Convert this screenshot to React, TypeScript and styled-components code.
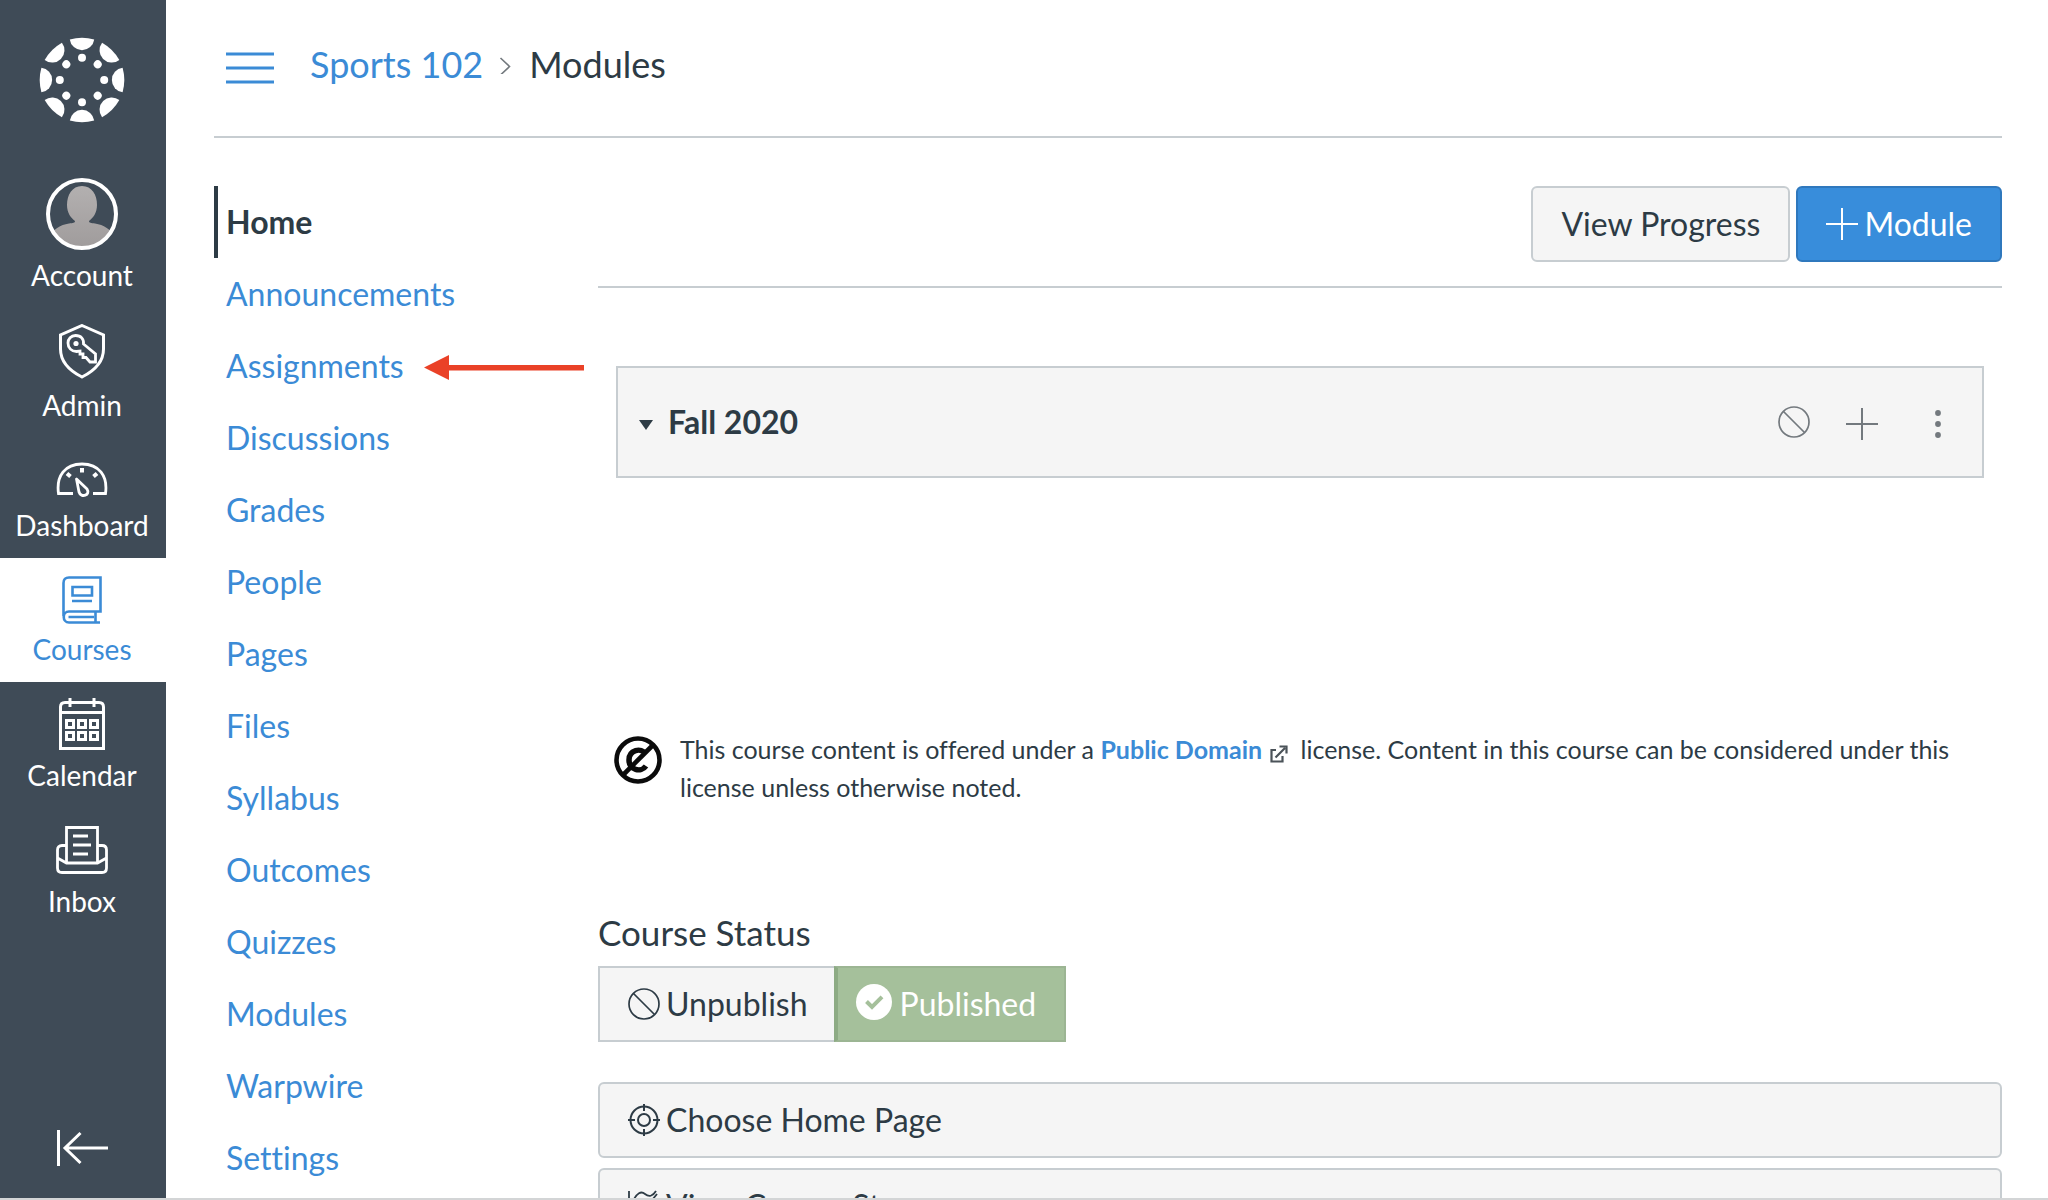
import React from 'react';
import styled, { createGlobalStyle, css } from 'styled-components';

const color = {
  nav: '#3f4b57',
  ink: '#2d3b45',
  link: '#3b8bd6',
  line: '#c7cdd1',
  fill: '#f5f5f5',
  green: '#a5c09b',
};

const GlobalStyle = createGlobalStyle`
  *, *::before, *::after { box-sizing: border-box; }
  html, body { margin: 0; background: #fff; }
  body, button { font-family: Lato, "Liberation Sans", sans-serif; color: ${color.ink}; font-variant-ligatures: none; }
  a { text-decoration: none; color: ${color.link}; }
  button { cursor: pointer; }
  svg { display: block; flex: none; }
`;

const Screen = styled.div`
  display: flex;
  height: 100vh;
  overflow: hidden;
  border-bottom: 2px solid #d3d5d6;
`;

const GlobalNav = styled.nav`
  display: flex;
  flex-direction: column;
  flex: none;
  width: 166px;
  background: ${color.nav};
`;

const Logo = styled.a`
  display: flex;
  justify-content: center;
  padding: 36px 2px 38px 0;
  color: #fff;
`;

const GlobalLink = styled.a<{ $active?: boolean }>`
  display: flex;
  flex-direction: column;
  align-items: center;
  gap: 8px;
  padding: 16px 2px 16px 0;
  font-size: 28px;
  line-height: 34px;
  color: #fff;
  ${(p) => p.$active && css`
    background: #fff;
    color: ${color.link};
  `}
`;

const Collapse = styled.button`
  display: flex;
  justify-content: center;
  margin-top: auto;
  padding: 30px 2px 30px 0;
  border: 0;
  background: none;
  color: #fff;
`;

const Page = styled.div`
  flex: 1;
  min-width: 0;
  padding: 0 46px 0 48px;
`;

const Header = styled.header`
  display: flex;
  align-items: center;
  gap: 36px;
  height: 138px;
  padding: 0 12px;
  border-bottom: 2px solid ${color.line};
`;

const MenuButton = styled.button`
  padding: 0;
  border: 0;
  background: none;
  color: ${color.link};
`;

const Crumbs = styled.ol`
  display: flex;
  align-items: center;
  gap: 18px;
  margin: 0;
  padding: 0 0 8px;
  list-style: none;
  font-size: 36px;
  line-height: 44px;
`;

const Crumb = styled.li`
  display: flex;
  align-items: center;
  gap: 16px;
`;

const Columns = styled.div`
  display: flex;
  padding-top: 48px;
`;

const CourseNav = styled.ul`
  flex: none;
  width: 384px;
  margin: 0;
  padding: 0;
  list-style: none;
`;

const CourseItem = styled.li`
  display: flex;
  align-items: center;
  gap: 20px;
  height: 72px;
`;

const CourseLink = styled.a<{ $active?: boolean }>`
  padding-left: 8px;
  border-left: 4px solid transparent;
  font-size: 32px;
  line-height: 72px;
  ${(p) => p.$active && css`
    border-color: ${color.ink};
    color: ${color.ink};
    font-weight: 700;
  `}
`;

const Content = styled.main`
  flex: 1;
  min-width: 0;
`;

const Toolbar = styled.div`
  display: flex;
  justify-content: flex-end;
  gap: 6px;
  padding-bottom: 24px;
  border-bottom: 2px solid ${color.line};
`;

const Button = styled.button<{ $primary?: boolean; $wide?: boolean }>`
  display: flex;
  align-items: center;
  gap: 6px;
  width: ${(p) => (p.$wide ? '100%' : 'auto')};
  height: 76px;
  padding: 0 28px;
  border: 2px solid ${(p) => (p.$primary ? '#2f78bd' : color.line)};
  border-radius: 6px;
  background: ${(p) => (p.$primary ? '#388ddb' : color.fill)};
  color: ${(p) => (p.$primary ? '#fff' : color.ink)};
  font-size: 32px;
  line-height: 40px;
`;

const ModuleCard = styled.section`
  display: flex;
  align-items: center;
  justify-content: space-between;
  height: 112px;
  margin: 78px 18px 0;
  padding: 0 20px;
  border: 2px solid ${color.line};
  background: ${color.fill};
`;

const ModuleToggle = styled.button`
  display: flex;
  align-items: center;
  gap: 14px;
  padding: 0;
  border: 0;
  background: none;
  font-size: 32px;
  line-height: 40px;
  font-weight: 700;
`;

const ModuleActions = styled.div`
  display: flex;
  align-items: center;
  gap: 36px;
  padding-top: 4px;
`;

const IconButton = styled.button<{ $raised?: boolean }>`
  padding: 0 0 ${(p) => (p.$raised ? '4px' : '0')};
  border: 0;
  background: none;
  color: #73797e;
`;

const License = styled.div`
  display: flex;
  gap: 18px;
  margin: 252px 16px 0;
`;

const LicenseIcon = styled.span`
  padding-top: 6px;
`;

const LicenseText = styled.p`
  margin: 0;
  font-size: 25px;
  line-height: 38px;
`;

const LicenseLink = styled.a`
  font-weight: 700;
`;

const ExternalMark = styled.span`
  display: inline-block;
  margin: 0 6px 0 8px;
  vertical-align: -4px;
`;

const StatusTitle = styled.h2`
  margin: 104px 0 12px;
  font-size: 35px;
  line-height: 44px;
  font-weight: 400;
`;

const StatusGroup = styled.div`
  display: flex;
  margin-bottom: 40px;
`;

const StatusButton = styled.button<{ $on?: boolean }>`
  display: flex;
  align-items: center;
  gap: 6px;
  height: 76px;
  padding: 0 26px 0 28px;
  border: 2px solid ${color.line};
  border-right-width: 0;
  background: ${color.fill};
  font-size: 32px;
  line-height: 40px;
  ${(p) => p.$on && css`
    gap: 8px;
    padding: 0 28px 0 18px;
    border: 2px solid #9cb593;
    border-left: 4px solid #8dab84;
    background: ${color.green};
    color: #fff;
  `}
`;

const Options = styled.div`
  display: grid;
  gap: 10px;
`;

const LogoIcon = () => (
  <svg width="88" height="88" viewBox="-44 -44 88 88" fill="currentColor" aria-hidden="true">
    {[0, 45, 90, 135, 180, 225, 270, 315].map((a) => (
      <g key={a} transform={`rotate(${a})`}>
        <path d="M-12.2 -40.6Q0 -44 12.2 -40.6A12.3 12.3 0 0 1 -12.2 -40.6Z" />
        <circle cy="-22.2" r="4" />
      </g>
    ))}
  </svg>
);

const AvatarIcon = () => (
  <svg width="72" height="72" viewBox="0 0 72 72" aria-hidden="true">
    <defs>
      <clipPath id="avatar"><circle cx="36" cy="36" r="33" /></clipPath>
      <linearGradient id="skin" x1="0" y1="0" x2="0" y2="1">
        <stop offset="0" stopColor="#b3b0b0" /><stop offset="1" stopColor="#9f9b9b" />
      </linearGradient>
    </defs>
    <path clipPath="url(#avatar)" fill="url(#skin)" d="M36 8C46 8 51 17 51 27C51 35 47 40 43 43C43 45 45 45 49 45.500C58 47 64 51 68 58V72H4V58C8 51 14 47 23 45.500C27 45 29 45 29 43C25 40 21 35 21 27C21 17 26 8 36 8Z" />
    <circle cx="36" cy="36" r="34" fill="none" stroke="#fff" strokeWidth="4" />
  </svg>
);

const AdminIcon = () => (
  <svg width="52" height="56" viewBox="0 0 52 56" fill="none" stroke="currentColor" strokeWidth="3" aria-hidden="true">
    <path d="M26 1.500L47.500 11V25C47.500 39 38 47 26 53C14 47 4.500 39 4.500 25V11Z" />
    <path d="M39.500 37.500V30L27.500 20C28 15 25 11.500 19.500 11.500C15 11.500 12 15 12 19C12 24 15.500 27.500 20.500 27.500L24 27V30H27V33.500H30L34 38H39.500Z" strokeWidth="2.800" />
    <circle cx="20" cy="19.500" r="2.600" fill="currentColor" stroke="none" />
  </svg>
);

const DashboardIcon = () => (
  <svg width="52" height="46" viewBox="0 0 52 46" fill="none" stroke="currentColor" strokeWidth="2.800" aria-hidden="true">
    <path d="M17 39.500H2.500C0 22 9 10 26 10S52 22 49.500 39.500H37" />
    <path d="M26 14V18.500M11 19.500L14.500 22.500M41 19.500L37.500 22.500" strokeWidth="4" />
    <path d="M20.500 25L31 35C35 41 25 44.500 23 38Z" strokeLinejoin="round" />
  </svg>
);

const CoursesIcon = () => (
  <svg width="52" height="50" viewBox="0 0 52 50" fill="none" stroke="currentColor" strokeWidth="2.600" aria-hidden="true">
    <path d="M7.500 42V9Q7.500 3.500 13 3.500H44.500V37.500H13C6 37.500 6 48.500 13 48.500H44M39.500 38V48M12.500 43H38" />
    <path d="M16.500 13H36V21.500H16.500ZM16 27H36" />
  </svg>
);

const CalendarIcon = () => (
  <svg width="52" height="52" viewBox="0 0 52 52" fill="none" stroke="currentColor" strokeWidth="3" aria-hidden="true">
    <path d="M4.500 50.500V9Q4.500 4.500 9 4.500H43Q47.500 4.500 47.500 9V50.500ZM4.500 14.500H47.500M14 0V9M38 0V9" />
    {[14, 26, 38].map((x) => [26, 38].map((y) => (
      <rect key={`${x}-${y}`} x={x - 3.5} y={y - 3.5} width="7" height="7" />
    )))}
  </svg>
);

const InboxIcon = () => (
  <svg width="52" height="52" viewBox="0 0 52 52" fill="none" stroke="currentColor" strokeWidth="2.800" aria-hidden="true">
    <path d="M10.500 39V3.500H41.500V39" />
    <path d="M10.500 21.500H6Q1.500 21.500 1.500 26V44Q1.500 48.500 6 48.500H46Q50.500 48.500 50.500 44V26Q50.500 21.500 46 21.500H41.500M1.500 34L10.500 39H41.500L50.500 34" />
    <path d="M17 12H32M17 21H35M17 30H32" />
  </svg>
);

const CollapseIcon = () => (
  <svg width="52" height="38" viewBox="0 0 52 38" fill="none" stroke="currentColor" strokeWidth="3" aria-hidden="true">
    <path d="M2.500 0V36M9 18H52M24.500 3L9 18L24.500 33" />
  </svg>
);

const MenuIcon = () => (
  <svg width="48" height="32" viewBox="0 0 48 32" stroke="currentColor" strokeWidth="3" aria-hidden="true">
    <path d="M0 2H48M0 16H48M0 30H48" />
  </svg>
);

const ChevronIcon = () => (
  <svg width="12" height="20" viewBox="0 0 12 20" fill="none" stroke="#73797e" strokeWidth="1.600" aria-hidden="true">
    <path d="M1.500 5L10.500 13.500L1.500 22" transform="translate(0 -1)" />
  </svg>
);

const PlusIcon = () => (
  <svg width="32" height="32" viewBox="0 0 32 32" stroke="currentColor" strokeWidth="2" aria-hidden="true">
    <path d="M0 16H32M16 0V32" />
  </svg>
);

const BanIcon = () => (
  <svg width="32" height="32" viewBox="0 0 32 32" fill="none" stroke="currentColor" strokeWidth="1.700" aria-hidden="true">
    <circle cx="16" cy="16" r="15" />
    <path d="M5.500 5.500L26.500 26.500" />
  </svg>
);

const DotsIcon = () => (
  <svg width="48" height="32" viewBox="0 0 48 32" fill="currentColor" aria-hidden="true">
    <circle cx="24" cy="5" r="2.900" />
    <circle cx="24" cy="16" r="2.900" />
    <circle cx="24" cy="27" r="2.900" />
  </svg>
);

const CaretIcon = () => (
  <svg width="16" height="16" viewBox="0 0 16 16" fill={color.ink} aria-hidden="true">
    <path d="M1 6H15L8 16Z" />
  </svg>
);

const PublicDomainIcon = () => (
  <svg width="48" height="48" viewBox="0 0 48 48" fill="none" stroke="#0b0b0b" aria-hidden="true">
    <circle cx="24" cy="24" r="21.500" strokeWidth="4.600" />
    <path d="M32 18C27 11 15 14 15 24S27 37 32 30" strokeWidth="5.500" />
    <path d="M39 9L9 39" strokeWidth="4.600" />
  </svg>
);

const ExternalIcon = () => (
  <svg width="18" height="18" viewBox="0 0 18 18" fill="none" stroke="#4b5359" strokeWidth="2.200" aria-hidden="true">
    <path d="M6 5H1.500V16.500H12.500V11M5.500 12.500L15 3M9.500 1.500H16.500V8.500" />
  </svg>
);

const CheckIcon = () => (
  <svg width="36" height="40" viewBox="0 0 36 40" fill="none" aria-hidden="true">
    <circle cx="18" cy="18" r="18" fill="#fff" />
    <path d="M10.500 17.500L16 23L26 12.800" stroke={color.green} strokeWidth="4" />
  </svg>
);

const TargetIcon = () => (
  <svg width="32" height="32" viewBox="0 0 32 32" fill="none" stroke="currentColor" strokeWidth="2" aria-hidden="true">
    <circle cx="16" cy="16" r="13.500" />
    <circle cx="16" cy="16" r="6" />
    <path d="M16 0V7M16 25V32M0 16H7M25 16H32" />
  </svg>
);

const StatsIcon = () => (
  <svg width="32" height="32" viewBox="0 0 32 32" fill="none" stroke="currentColor" strokeWidth="1.800" aria-hidden="true">
    <path d="M1 1V31H32M5 11Q11 -1 17 4T28 1M5 20L14 11L20 15L29 4" />
  </svg>
);

const ArrowIcon = () => (
  <svg width="160" height="30" viewBox="0 0 160 30" fill="#ea4127" aria-hidden="true">
    <path d="M0 16.500L25 4V14H160V19.500H25V29Z" />
  </svg>
);

const globalLinks = [
  { label: 'Account', icon: <AvatarIcon /> },
  { label: 'Admin', icon: <AdminIcon /> },
  { label: 'Dashboard', icon: <DashboardIcon /> },
  { label: 'Courses', icon: <CoursesIcon />, active: true },
  { label: 'Calendar', icon: <CalendarIcon /> },
  { label: 'Inbox', icon: <InboxIcon /> },
];

const courseLinks = [
  'Home', 'Announcements', 'Assignments', 'Discussions', 'Grades', 'People', 'Pages',
  'Files', 'Syllabus', 'Outcomes', 'Quizzes', 'Modules', 'Warpwire', 'Settings',
];

export default function App() {
  return (
    <>
      <GlobalStyle />
      <Screen>
        <GlobalNav>
          <Logo href="#" aria-label="Canvas"><LogoIcon /></Logo>
          {globalLinks.map((l) => (
            <GlobalLink key={l.label} href="#" $active={l.active}>
              {l.icon}
              {l.label}
            </GlobalLink>
          ))}
          <Collapse aria-label="Minimize navigation"><CollapseIcon /></Collapse>
        </GlobalNav>
        <Page>
          <Header>
            <MenuButton aria-label="Course menu"><MenuIcon /></MenuButton>
            <Crumbs>
              <Crumb><a href="#">Sports 102</a><ChevronIcon /></Crumb>
              <Crumb>Modules</Crumb>
            </Crumbs>
          </Header>
          <Columns>
            <CourseNav>
              {courseLinks.map((name) => (
                <CourseItem key={name}>
                  <CourseLink href="#" $active={name === 'Home'}>{name}</CourseLink>
                  {name === 'Assignments' && <ArrowIcon />}
                </CourseItem>
              ))}
            </CourseNav>
            <Content>
              <Toolbar>
                <Button>View Progress</Button>
                <Button $primary><PlusIcon />Module</Button>
              </Toolbar>
              <ModuleCard>
                <ModuleToggle><CaretIcon />Fall 2020</ModuleToggle>
                <ModuleActions>
                  <IconButton $raised aria-label="Unpublished"><BanIcon /></IconButton>
                  <IconButton aria-label="Add item"><PlusIcon /></IconButton>
                  <IconButton aria-label="Manage module"><DotsIcon /></IconButton>
                </ModuleActions>
              </ModuleCard>
              <License>
                <LicenseIcon><PublicDomainIcon /></LicenseIcon>
                <LicenseText>
                  This course content is offered under a <LicenseLink href="#">Public Domain</LicenseLink>
                  <ExternalMark><ExternalIcon /></ExternalMark> license. Content in this course can be
                  considered under this license unless otherwise noted.
                </LicenseText>
              </License>
              <StatusTitle>Course Status</StatusTitle>
              <StatusGroup>
                <StatusButton><BanIcon />Unpublish</StatusButton>
                <StatusButton $on><CheckIcon />Published</StatusButton>
              </StatusGroup>
              <Options>
                <Button $wide><TargetIcon />Choose Home Page</Button>
                <Button $wide><StatsIcon />View Course Stream</Button>
              </Options>
            </Content>
          </Columns>
        </Page>
      </Screen>
    </>
  );
}
